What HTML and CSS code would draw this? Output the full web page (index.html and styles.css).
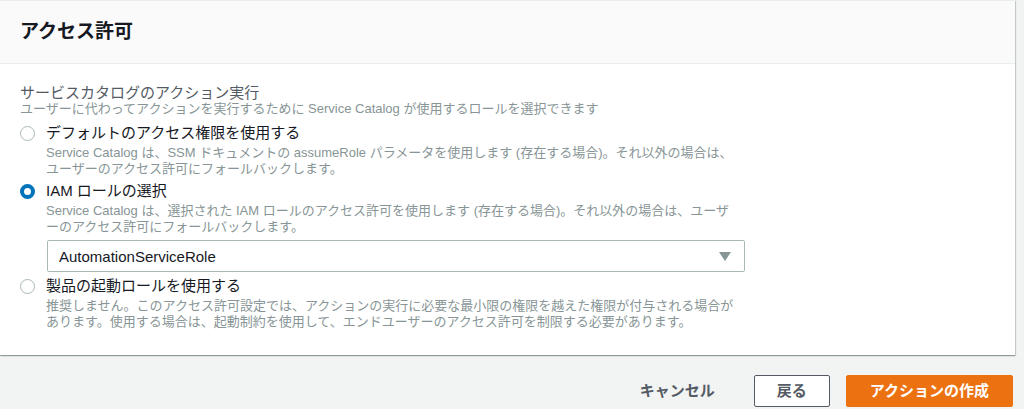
FILE: index.html
```html
<!DOCTYPE html>
<html lang="ja">
<head>
<meta charset="utf-8">
<title>アクセス許可</title>
<link rel="stylesheet" href="styles.css">
</head>
<body>
<div class="page">
  <section class="panel">
    <header class="panel-header">
      <h2 class="panel-title">アクセス許可</h2>
    </header>
    <div class="panel-body">
      <div class="field-label">サービスカタログのアクション実行</div>
      <div class="field-desc">ユーザーに代わってアクションを実行するために Service Catalog が使用するロールを選択できます</div>

      <div class="option">
        <div class="option-row">
          <span class="radio"></span>
          <span class="option-label">デフォルトのアクセス権限を使用する</span>
        </div>
        <div class="option-desc">Service Catalog は、SSM ドキュメントの assumeRole パラメータを使用します (存在する場合)。それ以外の場合は、<br>ユーザーのアクセス許可にフォールバックします。</div>
      </div>

      <div class="option">
        <div class="option-row">
          <span class="radio radio-checked"></span>
          <span class="option-label">IAM ロールの選択</span>
        </div>
        <div class="option-desc">Service Catalog は、選択された IAM ロールのアクセス許可を使用します (存在する場合)。それ以外の場合は、ユーザ<br>ーのアクセス許可にフォールバックします。</div>
        <div class="select">
          <span class="select-value">AutomationServiceRole</span>
          <svg class="select-caret" width="12" height="9" viewBox="0 0 12 9"><polygon points="0,0 12,0 6,9" fill="#879596"/></svg>
        </div>
      </div>

      <div class="option option-last">
        <div class="option-row">
          <span class="radio"></span>
          <span class="option-label">製品の起動ロールを使用する</span>
        </div>
        <div class="option-desc">推奨しません。このアクセス許可設定では、アクションの実行に必要な最小限の権限を越えた権限が付与される場合が<br>あります。使用する場合は、起動制約を使用して、エンドユーザーのアクセス許可を制限する必要があります。</div>
      </div>
    </div>
  </section>

  <div class="actions">
    <button class="btn btn-link">キャンセル</button>
    <button class="btn btn-normal">戻る</button>
    <button class="btn btn-primary">アクションの作成</button>
  </div>
</div>
</body>
</html>
```
FILE: styles.css
```css
html, body {
  margin: 0;
  padding: 0;
  background: #f2f3f3;
}
body {
  font-family: "Liberation Sans", "Noto Sans CJK JP", sans-serif;
  color: #16191f;
}
.page {
  width: 1015px;
}
.panel {
  background: #ffffff;
  border-top: 1px solid #eaeded;
  box-shadow: 0 1px 1px 0 rgba(0, 28, 36, 0.3), 1px 1px 1px 0 rgba(0, 28, 36, 0.15);
}
.panel-header {
  background: #fafafa;
  border-bottom: 1px solid #eaeded;
  height: 62px;
  display: flex;
  align-items: center;
  padding: 0 20px;
}
.panel-title {
  margin: 0;
  font-size: 19px;
  font-weight: 700;
  line-height: 24px;
  color: #16191f;
}
.panel-body {
  padding: 20px 20px 25px 20px;
}
.field-label {
  font-size: 15px;
  line-height: 18px;
  color: #545b64;
}
.field-desc {
  font-size: 13px;
  line-height: 14px;
  color: #879596;
  margin-bottom: 6px;
}
.option {
  margin-bottom: 3px;
}
.option-last {
  margin-bottom: 0;
}
.option-row {
  display: flex;
  align-items: center;
  height: 22px;
}
.radio {
  box-sizing: border-box;
  width: 15px;
  height: 15px;
  border-radius: 50%;
  border: 1.5px solid #aab7b8;
  background: #fff;
  margin-right: 11px;
  flex: none;
}
.radio-checked {
  border: 4px solid #0073bb;
  background: #fff;
}
.option-label {
  font-size: 15px;
  line-height: 22px;
  color: #16191f;
}
.option-desc {
  margin-left: 26px;
  margin-top: 1px;
  font-size: 13px;
  line-height: 16px;
  color: #879596;
}
.select {
  box-sizing: border-box;
  margin: 5px 0 0 27px;
  width: 698px;
  height: 32px;
  border: 1px solid #aab7b8;
  border-radius: 2px;
  display: flex;
  align-items: center;
  justify-content: space-between;
  padding: 0 13px 0 11px;
}
.select-value {
  font-size: 15px;
  color: #16191f;
}
.select-caret {
  display: block;
}
.actions {
  display: flex;
  justify-content: flex-end;
  align-items: center;
  padding-top: 20px;
  padding-right: 2px;
}
.btn {
  font-family: "Liberation Sans", "Noto Sans CJK JP", sans-serif;
  font-size: 15px;
  font-weight: 700;
  height: 32px;
  box-sizing: border-box;
  border-radius: 2px;
  line-height: 20px;
  cursor: pointer;
}
.btn-link {
  background: transparent;
  border: 1px solid transparent;
  color: #545b64;
  padding: 0 20px;
  margin-right: 18px;
}
.btn-normal {
  background: #fff;
  border: 1px solid #545b64;
  color: #545b64;
  padding: 0 22px;
  margin-right: 16px;
}
.btn-primary {
  background: #ec7211;
  border: 1px solid #ec7211;
  color: #fff;
  padding: 0 23px;
}
```
